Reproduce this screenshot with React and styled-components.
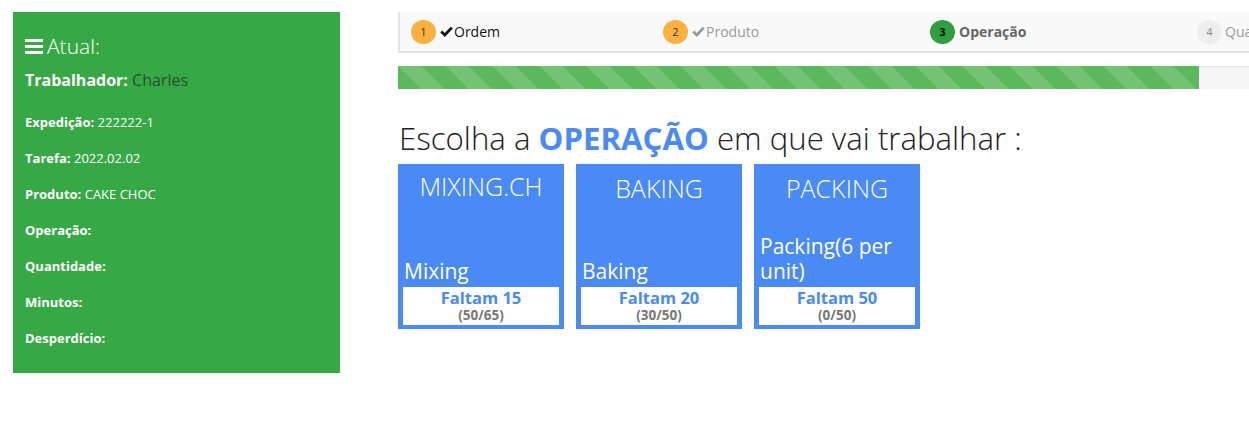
import React from 'react';
import styled, { createGlobalStyle } from 'styled-components';

const GlobalStyle = createGlobalStyle`
  html, body {
    margin: 0;
    padding: 0;
    background: #fff;
    font-family: "Open Sans", "Noto Sans", sans-serif;
    color: #333;
  }
  * { box-sizing: border-box; }
`;

const Page = styled.div`
  display: grid;
  grid-template-columns: 327px 1fr;
  column-gap: 58px;
  padding: 12px 0 0 13px;
  width: 1249px;
  height: 421px;
  overflow: hidden;
`;

const Sidebar = styled.aside`
  background: #37a846;
  color: #fff;
  height: 361px;
  padding: 20px 12px 0;
`;

const SideTitle = styled.h3`
  margin: 0 0 8px;
  font-size: 21px;
  font-weight: 300;
  line-height: 28px;
  display: flex;
  align-items: center;
  gap: 4px;
`;

const Worker = styled.div`
  font-size: 16px;
  line-height: 24px;
  margin-bottom: 12px;
  b { font-weight: 700; }
  span { color: #24532b; }
`;

const InfoRow = styled.div`
  font-size: 13px;
  line-height: 36px;
  b { font-weight: 700; }
`;

const Main = styled.main`
  overflow: hidden;
  min-width: 0;
`;

const Steps = styled.ul`
  list-style: none;
  margin: 0;
  padding: 0 0 0 11px;
  width: 1068px;
  height: 41px;
  display: grid;
  grid-template-columns: 252px 267px 267px 267px;
  align-items: center;
  background: #f9f9f9;
  border-left: 2px solid #e4e4e4;
  border-bottom: 2px solid #e0e0e0;
`;

const Step = styled.li`
  display: flex;
  align-items: center;
  font-size: 14px;
  color: ${p => p.$color};
  font-weight: ${p => (p.$active ? 700 : 400)};
  white-space: nowrap;
`;

const Badge = styled.span`
  width: 25px;
  height: 24px;
  border-radius: 50%;
  background: ${p => p.$bg};
  color: ${p => p.$fg};
  font-size: 11px;
  font-weight: ${p => (p.$active ? 700 : 400)};
  display: inline-flex;
  align-items: center;
  justify-content: center;
  margin-right: ${p => (p.$gap ? 3 : 4)}px;
  flex-shrink: 0;
`;

const CheckIcon = styled.svg`
  width: 13px;
  height: 11px;
  margin-right: 1px;
`;

const Check = () => (
  <CheckIcon viewBox="0 0 13 11">
    <path d="M1.2 5.6 L4.8 9 L11.8 1.6" fill="none" stroke="currentColor" strokeWidth="2.8" strokeLinejoin="miter" />
  </CheckIcon>
);

const Progress = styled.div`
  width: 1068px;
  height: 23px;
  margin-top: 13px;
  background: #f5f5f5;
  box-shadow: inset 0 1px 2px rgba(0, 0, 0, 0.08);
`;

const Fill = styled.div`
  height: 100%;
  background-color: #5cb85c;
  background-image: linear-gradient(
    45deg,
    rgba(255, 255, 255, 0.15) 25%,
    transparent 25%,
    transparent 50%,
    rgba(255, 255, 255, 0.15) 50%,
    rgba(255, 255, 255, 0.15) 75%,
    transparent 75%,
    transparent
  );
  background-size: 47px 47px;
`;

const Heading = styled.h2`
  margin: 28px 0 0 1px;
  font-size: 31.2px;
  font-weight: 300;
  line-height: 42px;
  color: #222;
  b {
    font-weight: 700;
    color: #4a8af4;
  }
`;

const Cards = styled.div`
  display: flex;
  gap: 12px;
  margin-top: 5px;
`;

const Card = styled.div`
  width: 166px;
  height: 165px;
  background: #4a8af4;
  color: #fff;
  display: flex;
  flex-direction: column;
  padding: 0 5px 4px;
`;

const CardTitle = styled.div`
  font-size: 25px;
  font-weight: 300;
  text-align: center;
  line-height: 30px;
  padding-top: ${p => p.$top}px;
`;

const CardLabel = styled.div`
  margin-top: auto;
  font-size: 21px;
  line-height: 25px;
  padding: 0 0 3px 1px;
`;

const Remaining = styled.div`
  background: #fff;
  height: 38px;
  text-align: center;
  padding-top: 0;
`;

const Faltam = styled.div`
  color: #4a8af4;
  font-size: 16.5px;
  font-weight: 700;
  line-height: 21px;
`;

const Ratio = styled.div`
  color: #777;
  font-size: 13.5px;
  font-weight: 700;
  line-height: 15px;
`;

const Bars = () => (
  <svg width="18" height="16" viewBox="0 0 18 16">
    <rect x="0" y="1" width="18" height="3" fill="#fff" />
    <rect x="0" y="7" width="18" height="3" fill="#fff" />
    <rect x="0" y="13" width="18" height="3" fill="#fff" />
  </svg>
);

const info = [
  ['Expedição:', '222222-1'],
  ['Tarefa:', '2022.02.02'],
  ['Produto:', 'CAKE CHOC'],
  ['Operação:', ''],
  ['Quantidade:', ''],
  ['Minutos:', ''],
  ['Desperdício:', ''],
];

const operations = [
  { code: 'MIXING.CH', name: 'Mixing', left: 15, done: 50, total: 65, top: 7 },
  { code: 'BAKING', name: 'Baking', left: 20, done: 30, total: 50, top: 9 },
  { code: 'PACKING', name: 'Packing(6 per unit)', left: 50, done: 0, total: 50, top: 9 },
];

export default function App() {
  const stepsDone = 3;
  const stepsTotal = 4;
  return (
    <>
      <GlobalStyle />
      <Page>
        <Sidebar>
          <SideTitle><Bars /> Atual:</SideTitle>
          <Worker><b>Trabalhador:</b> <span>Charles</span></Worker>
          {info.map(([label, value]) => (
            <InfoRow key={label}><b>{label}</b> {value}</InfoRow>
          ))}
        </Sidebar>
        <Main>
          <Steps>
            <Step $color="#111">
              <Badge $bg="#fbb040" $fg="#333">1</Badge>
              <Check />Ordem
            </Step>
            <Step $color="#999">
              <Badge $bg="#fbb040" $fg="#333">2</Badge>
              <Check />Produto
            </Step>
            <Step $color="#666" $active>
              <Badge $bg="#2e9e40" $fg="#111" $active>3</Badge>Operação
            </Step>
            <Step $color="#999">
              <Badge $bg="#eeeeee" $fg="#888" $gap>4</Badge>Quantidade
            </Step>
          </Steps>
          <Progress>
            <Fill style={{ width: `${(stepsDone / stepsTotal) * 100}%` }} />
          </Progress>
          <Heading>Escolha a <b>OPERAÇÃO</b> em que vai trabalhar :</Heading>
          <Cards>
            {operations.map(op => (
              <Card key={op.code}>
                <CardTitle $top={op.top}>{op.code}</CardTitle>
                <CardLabel>{op.name}</CardLabel>
                <Remaining>
                  <Faltam>Faltam {op.left}</Faltam>
                  <Ratio>({op.done}/{op.total})</Ratio>
                </Remaining>
              </Card>
            ))}
          </Cards>
        </Main>
      </Page>
    </>
  );
}
